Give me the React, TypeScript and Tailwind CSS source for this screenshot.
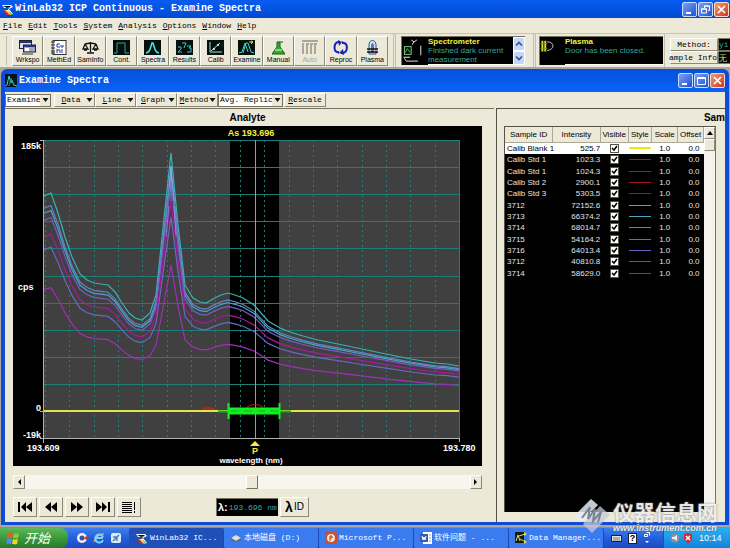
import { useState } from 'react';
import type { ReactNode } from 'react';

interface Sample {
  id: string;
  intensity: number;
  color: string;
  visible: boolean;
}

const initialSamples: Sample[] = [
  { id: 'Calib Blank 1', intensity: 525.7, color: '#f0e800', visible: true },
  { id: 'Calib Std 1', intensity: 1023.3, color: '#a01818', visible: true },
  { id: 'Calib Std 1', intensity: 1024.3, color: '#a01818', visible: true },
  { id: 'Calib Std 2', intensity: 2900.1, color: '#a01818', visible: true },
  { id: 'Calib Std 3', intensity: 5303.5, color: '#a01818', visible: true },
  { id: '3712', intensity: 72152.6, color: '#35b5b0', visible: true },
  { id: '3713', intensity: 66374.2, color: '#48a8c4', visible: true },
  { id: '3714', intensity: 68014.7, color: '#6484c4', visible: true },
  { id: '3715', intensity: 54164.2, color: '#6a68c0', visible: true },
  { id: '3716', intensity: 64013.4, color: '#7b58c8', visible: true },
  { id: '3712', intensity: 40810.8, color: '#a02fb8', visible: true },
  { id: '3714', intensity: 58629.0, color: '#a81a9c', visible: true },
];

// Strongest spectrum, in chart units; the others are scaled from it
const BASELINE = 285;
const MAX_INTENSITY = 72152.6;
const spectrum = [
  [31, 70], [38, 67], [45, 87], [52, 111], [59, 131], [67, 148], [74, 154], [81, 157], [88, 158],
  [95, 159], [102, 166], [109, 177], [116, 187], [122, 192], [129, 194], [137, 187], [143, 169],
  [150, 102], [158, 27], [165, 99], [172, 159], [180, 172], [187, 176], [193, 177], [200, 173],
  [208, 169], [215, 167], [222, 169], [230, 172], [241, 179], [248, 187], [255, 195], [267, 202],
  [277, 206], [290, 210], [305, 214], [325, 218], [349, 223], [373, 228], [398, 233], [422, 237],
  [434, 238], [446, 240],
];

const menuItems = ['File', 'Edit', 'Tools', 'System', 'Analysis', 'Options', 'Window', 'Help'];

const raised = 'border border-t-white border-l-white border-b-[#8d897a] border-r-[#8d897a] bg-[#ece9d8]';

function linePoints(intensity: number) {
  const k = intensity / MAX_INTENSITY;
  return spectrum.map(([x, y]) => `${x},${(BASELINE - k * (BASELINE - y)).toFixed(1)}`).join(' ');
}

function WinLabLogo({ className }: { className: string }) {
  return (
    <svg viewBox="0 0 13 13" className={className} aria-hidden="true">
      <path d="M1 2h9l2 2-4 2 4 5H8L4 7h3l1-2H3z" fill="#fff" />
      <path d="M2 3h7l1 1-4 1z" fill="#111" />
      <path d="M4 7l5 5H6L2 8z" fill="#d22" />
      <path d="M6 7l5 5H9L4 7z" fill="#fd3" />
      <path d="M7 7l5 5h-2z" fill="#3b3" />
    </svg>
  );
}

function SpectraLogo() {
  return (
    <svg viewBox="0 0 12 13" className="h-[13px] w-3" aria-hidden="true">
      <rect width="12" height="13" fill="#06131c" />
      <path d="M0 12l2-1 2-9 2 7 1-3 2 5 3 1" fill="none" stroke="#3fd6d0" />
      <path d="M4 12l2-8 3 8" fill="none" stroke="#1f8e6a" />
    </svg>
  );
}

function WindowButtons({ restore = false }: { restore?: boolean }) {
  const blue = 'grid h-[15px] w-[15px] place-items-center rounded-xs border border-[#c8dcff] bg-linear-to-br from-[#7aa2f4] to-[#1c4fd0]';
  return (
    <div className="flex gap-px">
      <button aria-label="Minimize" className={blue}>
        <svg viewBox="0 0 11 11" className="h-[11px] w-[11px]"><path d="M2 8h5v2H2z" fill="#fff" /></svg>
      </button>
      <button aria-label={restore ? 'Restore' : 'Maximize'} className={blue}>
        <svg viewBox="0 0 11 11" className="h-[11px] w-[11px]" fill="none" stroke="#fff">
          {restore ? (
            <>
              <path d="M4.500 4V2h5v4.500H8M4 2h6" />
              <path d="M1.500 5h5v4h-5zM1 5h6" />
            </>
          ) : (
            <path d="M1.500 2.500h8v7h-8zM1 3.500h9" />
          )}
        </svg>
      </button>
      <button
        aria-label="Close"
        className="grid h-[15px] w-[15px] place-items-center rounded-xs border border-[#ffd8cc] bg-linear-to-br from-[#ec9878] to-[#c8391a]"
      >
        <svg viewBox="0 0 11 11" className="h-[11px] w-[11px]">
          <path d="M2 2l7 7M9 2L2 9" stroke="#fff" strokeWidth="1.700" />
        </svg>
      </button>
    </div>
  );
}

const toolButtons: { label: string; disabled?: boolean; icon: ReactNode }[] = [
  {
    label: 'Wrkspo',
    icon: (
      <>
        <rect x="0.500" y="0.500" width="12" height="8" fill="#dde" stroke="#223" />
        <rect x="1" y="1" width="11" height="2" fill="#23337c" />
        <rect x="4.500" y="5" width="12" height="7" fill="#9fa8c4" stroke="#223" />
        <rect x="5" y="5" width="11" height="2" fill="#23337c" />
        <path d="M3 14h11" stroke="#333" />
        <rect x="6" y="8" width="4" height="3" fill="#fff" />
      </>
    ),
  },
  {
    label: 'MethEd',
    icon: (
      <>
        <rect x="3" y="0.500" width="13" height="14" fill="#fff" stroke="#333" />
        <path d="M1 2h4M1 5h4M1 8h4M1 11h4M1 13h4" stroke="#222" />
        <path d="M10 4H7v3h3M11 5v2h2V5M7 9v4M7 10h3v3M12 9v4" stroke="#2a3d9c" fill="none" />
      </>
    ),
  },
  {
    label: 'SamInfo',
    icon: (
      <path
        d="M8.500 2v10M5 13h7M3 4l5.500-1L14 4M3 4L1 9h5L3 4M14 4l-3 5h5l-2-5M2 10h3M12 10h3"
        stroke="#111"
        strokeWidth="1.300"
        fill="none"
      />
    ),
  },
  {
    label: 'Cont.',
    icon: (
      <>
        <rect width="17" height="15" fill="#04100c" />
        <path d="M1 13h3V3h8v10h4" stroke="#37a08c" fill="none" />
      </>
    ),
  },
  {
    label: 'Spectra',
    icon: (
      <>
        <rect width="17" height="15" fill="#04100c" />
        <path d="M2 13c4-1 4-4 6-10h1c2 6 2 9 6 10" stroke="#4fe0e0" strokeWidth="1.600" fill="none" />
      </>
    ),
  },
  {
    label: 'Results',
    icon: (
      <>
        <rect width="17" height="15" fill="#04100c" />
        <path d="M2 7h3v2L2 12h4M6 3h4L8 8M11 6h4l-2 2h2v4h-4" stroke="#3fc8c8" fill="none" />
      </>
    ),
  },
  {
    label: 'Calib',
    icon: (
      <>
        <rect width="17" height="15" fill="#04100c" />
        <path d="M3 2v10h12M4 11l9-8" stroke="#9fe0d8" fill="none" />
        <circle cx="7" cy="9" r="1" fill="#fff" />
        <circle cx="11" cy="5" r="1" fill="#fff" />
      </>
    ),
  },
  {
    label: 'Examine',
    icon: (
      <>
        <rect width="17" height="15" fill="#04100c" />
        <path d="M1 13l3-1 3-9 3 9M5 13l3-10h2l3 9 3 1" stroke="#46cfc4" fill="none" />
        <path d="M11 2h4M13 1l2 1-2 2" stroke="#e6e23c" fill="none" />
      </>
    ),
  },
  {
    label: 'Manual',
    icon: (
      <>
        <path d="M7 2h3v5l5 7H2l5-7z" fill="#30b030" stroke="#125c12" />
        <path d="M7 2l5-1M5 10h7" stroke="#e7f9e0" />
        <path d="M7 2h6" stroke="#125c12" />
      </>
    ),
  },
  {
    label: 'Auto',
    disabled: true,
    icon: <path d="M1 1h16M2 3v11M6 5v9M10 5v9M14 5v9M5 4h3M9 4h3M13 4h3" stroke="#aaa798" strokeWidth="2" />,
  },
  {
    label: 'Reproc',
    icon: (
      <>
        <path d="M7 2C2 2 1 10 5 12M11 13c5-1 5-9 1-10" stroke="#1722b8" strokeWidth="2" fill="none" />
        <path d="M6 0l4 2-3 4zM12 15l-5-2 4-4zM2 11h5v3zM15 4h-5V1z" fill="#1722b8" />
      </>
    ),
  },
  {
    label: 'Plasma',
    icon: (
      <>
        <path d="M5 14V5c0-6 7-6 7 0v9z" fill="#c8f2fa" stroke="#1a5a8c" />
        <path d="M7 13V6c0-4 3-4 3 0v7z" fill="#4d6ce0" />
        <path d="M8.500 12V5" stroke="#e23c8c" />
        <path d="M3 9h11M3 12h11" stroke="#111" strokeWidth="1.500" />
      </>
    ),
  },
];

function Chevron({ up = false }: { up?: boolean }) {
  return (
    <svg viewBox="0 0 8 8" className="h-2 w-2" aria-hidden="true">
      <path d={up ? 'M1 5.500l3-3 3 3' : 'M1 2.500l3 3 3-3'} fill="none" stroke="#3a5382" strokeWidth="1.700" />
    </svg>
  );
}

function MainToolbar() {
  return (
    <div className="flex h-[34px] items-center overflow-hidden border-t border-[#c9c5b4] bg-[#ece9d8]">
      <div className="ml-1 h-[29px] w-[3px] shrink-0 border-r border-[#c2beae]" />
      <div className="ml-[5px] grid h-[30px] w-[376px] shrink-0 grid-cols-12">
        {toolButtons.map((tool) => (
          <button
            key={tool.label}
            disabled={tool.disabled}
            className={`flex flex-col items-center gap-px pt-[3px] ${raised} text-black disabled:text-[#aaa798]`}
          >
            <svg viewBox="0 0 17 15" className="h-[15px] w-[17px]" aria-hidden="true">{tool.icon}</svg>
            <span className="text-[7px] leading-[8px]">{tool.label}</span>
          </button>
        ))}
      </div>
      <div className="ml-[5px] h-full w-[3px] shrink-0 border-x border-[#c2beae]" />
      <div className="ml-[5px] flex h-[29px] w-[124px] shrink-0 border-t border-l border-[#77735f] bg-black">
        <svg viewBox="0 0 26 28" className="h-[27px] w-[26px] shrink-0" fill="none" aria-hidden="true">
          <path d="M9 3l3 2 3-2M12 5l-2 3M2 22l2 3h12M19 9v10" stroke="#e8e8e8" />
          <rect x="2" y="10" width="7" height="8" stroke="#8ad08a" />
          <path d="M3 16l2-4 3 4" stroke="#3fd03f" />
          <path d="M1 21h7" stroke="#eee" />
        </svg>
        <div className="min-w-0 flex-1 overflow-hidden border-b border-white text-[8px] leading-[9px] whitespace-nowrap text-[#35a79c]">
          <div className="font-bold text-[#f2ef3a]">Spectrometer</div>
          <div>Finished dark current</div>
          <div>measurement</div>
        </div>
        <div className="flex w-[12px] flex-col bg-white">
          <button aria-label="Scroll up" className="grid flex-1 place-items-center rounded-xs border border-white bg-[#c6d6fb]">
            <Chevron up />
          </button>
          <button aria-label="Scroll down" className="grid flex-1 place-items-center rounded-xs border border-white bg-[#c6d6fb]">
            <Chevron />
          </button>
        </div>
      </div>
      <div className="ml-2 h-full w-[3px] shrink-0 border-x border-[#c2beae]" />
      <div className="ml-[3px] flex h-[29px] w-[124px] shrink-0 border-t border-l border-[#77735f] bg-black">
        <svg viewBox="0 0 25 28" className="h-[27px] w-[25px] shrink-0" fill="none" aria-hidden="true">
          <path d="M2 4v11M5 4v11" stroke="#dfdc2e" strokeWidth="2" />
          <path d="M0 7h7M0 12h7" stroke="#8c8a12" />
          <path d="M7 5c8 0 8 8 0 9" stroke="#c8c8c8" />
        </svg>
        <div className="min-w-0 flex-1 overflow-hidden border-b border-white text-[8px] leading-[9px] whitespace-nowrap text-[#35a79c]">
          <div className="font-bold text-[#f2ef3a]">Plasma</div>
          <div>Door has been closed.</div>
        </div>
      </div>
      <div className="ml-px h-full w-[1px] shrink-0 bg-[#c2beae]" />
      <div className="ml-[5px] grid h-[26px] min-w-0 flex-1 grid-cols-[48px_1fr] grid-rows-2 font-['Liberation_Mono',monospace] text-[8px] leading-[11px] whitespace-nowrap">
        <button className={raised}>Method:</button>
        <div className="border-y border-l border-[#77735f] bg-black text-[#35a79c]">yi</div>
        <button className={`flex justify-end ${raised}`}>ample Info</button>
        <div className="border-y border-l border-[#77735f] bg-black font-['Noto_Sans_CJK_SC',sans-serif] text-[#d6cf6a]">无</div>
      </div>
    </div>
  );
}

function DropArrow() {
  return (
    <svg viewBox="0 0 7 4" className="pointer-events-none h-1 w-[7px] shrink-0" aria-hidden="true">
      <path d="M0.500 0h6l-3 4z" fill="#111" />
    </svg>
  );
}

function ToolSelect({ label, width, options }: { label: string; width: string; options: string[] }) {
  return (
    <label className={`flex h-[13px] shrink-0 items-center border border-[#77735f] bg-white ${width}`}>
      <select aria-label={label} className="h-full min-w-0 flex-1 appearance-none overflow-hidden bg-white pl-px">
        {options.map((option) => (
          <option key={option}>{option}</option>
        ))}
      </select>
      <span className="grid h-full w-[10px] place-items-center bg-[#ece9d8]">
        <DropArrow />
      </span>
    </label>
  );
}

function SpectraToolbar() {
  return (
    <div className="flex h-4 items-center bg-[#ece9d8] font-['Liberation_Mono',monospace] text-[8px] leading-[10px]">
      <ToolSelect label="Mode" width="w-[46px]" options={['Examine']} />
      <div className="ml-[3px] flex">
        {['Data', 'Line', 'Graph', 'Method'].map((name) => (
          <button key={name} className={`flex h-[14px] w-[41px] items-center justify-between px-px ${raised}`}>
            <span className="flex-1 text-center">
              <span className="underline">{name[0]}</span>
              {name.slice(1)}
            </span>
            <DropArrow />
          </button>
        ))}
      </div>
      <ToolSelect label="Replicates" width="w-[65px]" options={['Avg. Replicates']} />
      <button className={`ml-px h-[14px] w-[42px] ${raised}`}>
        <span className="underline">R</span>escale
      </button>
    </div>
  );
}

function SpectraChart({ samples }: { samples: Sample[] }) {
  const rows = Array.from({ length: 10 }, (_, i) => 14.5 + Math.round(i * 27.1));
  const cols = Array.from({ length: 17 }, (_, i) => 32.5 + Math.round(i * 24.35));

  return (
    <svg
      viewBox="0 0 469 340"
      className="block w-full bg-black font-['Liberation_Sans',sans-serif] text-[9px] font-bold"
      role="img"
      aria-label="Spectra"
    >
      <rect x="31" y="14" width="415" height="298" fill="#404040" />
      <rect x="217" y="14" width="49" height="298" fill="#000" />
      <g stroke="#1f7f78">
        {rows.map((y) => (
          <path key={y} d={`M31 ${y}H446`} />
        ))}
        {cols.map((x) => (
          <path key={x} d={`M${x} 14V312`} strokeDasharray="2 3" />
        ))}
        <path d="M446.500 14V312" />
      </g>
      <g fill="none" strokeWidth="1.200">
        {samples
          .filter((sample) => sample.visible && sample.intensity > 10000)
          .map((sample) => (
            <polyline key={sample.intensity} points={linePoints(sample.intensity)} stroke={sample.color} />
          ))}
      </g>
      <path d="M158 40v35M156 60l2-20 3 35M153 110l3-30M163 110l-2-30" stroke="#9fb4ff" fill="none" opacity="0.6" />
      <path d="M242.500 14V312" stroke="#a8a440" />
      <path d="M27 14.500h4M30.500 14V317M27 312.500H446M446.500 312v4M27 285.500h4" stroke="#b0b0b0" fill="none" />
      <path d="M187 284c4-4 13-4 17 0z" fill="#b02814" />
      <path d="M31 285H446" stroke="#e2e24a" strokeWidth="2" />
      <path d="M234 281q8-5 16 0" stroke="#b02814" fill="none" />
      <path d="M205 285.500h73" stroke="#10b010" strokeWidth="2" />
      <path d="M216 285h51" stroke="#10f020" strokeWidth="7" />
      <path d="M215.500 277v16M266.500 277v16" stroke="#10f020" strokeWidth="2" />
      <path d="M218 285h47" stroke="#08b818" strokeDasharray="8 5" />
      <path d="M242 315l5 5h-10z" fill="#f2ef3a" />
      <g fill="#fff">
        <text x="28" y="23" textAnchor="end">185k</text>
        <text x="5" y="164">cps</text>
        <text x="28" y="285" textAnchor="end">0</text>
        <text x="28" y="312" textAnchor="end">-19k</text>
        <text x="14" y="325">193.609</text>
        <text x="430" y="325">193.780</text>
        <text x="238" y="337" textAnchor="middle" fontSize="8">wavelength (nm)</text>
      </g>
      <g fill="#f2ef3a">
        <text x="238" y="10" textAnchor="middle">As 193.696</text>
        <text x="242" y="328" textAnchor="middle">P</text>
      </g>
    </svg>
  );
}

const navButtons = [
  { label: 'First', path: 'M2 1h2v10H2zM10 1v10L5 6zM16 1v10l-6-5z' },
  { label: 'Previous', path: 'M9 1v10L3 6zM15 1v10L9 6z' },
  { label: 'Next', path: 'M3 1v10l6-5zM9 1v10l6-5z' },
  { label: 'Last', path: 'M2 1v10l6-5zM8 1v10l5-5zM14 1h2v10h-2z' },
  { label: 'List', path: 'M2 1h10v1H2zM2 3h10v1H2zM2 5h10v1H2zM2 7h10v1H2zM2 9h10v1H2zM2 11h10v1H2zM14 1h1v8h-1zM14 10h1v2h-1z' },
];

function AnalytePanel({ samples }: { samples: Sample[] }) {
  const [position, setPosition] = useState(51);

  return (
    <section className="min-w-0 border-t border-[#77735f] pr-[12px] pl-2">
      <h2 className="h-[17px] text-center text-[10px] leading-[17px] font-bold">Analyte</h2>
      <SpectraChart samples={samples} />
      <div className="mt-[9px] flex h-[14px] bg-[#f6f5ee]">
        <button aria-label="Scroll left" className={`grid w-3 place-items-center ${raised}`}>
          <svg viewBox="0 0 4 6" className="h-[6px] w-1"><path d="M4 0v6L1 3z" /></svg>
        </button>
        <input
          type="range"
          aria-label="Wavelength position"
          value={position}
          onChange={(e) => setPosition(Number(e.target.value))}
          className="h-full min-w-0 flex-1 appearance-none bg-transparent [&::-webkit-slider-thumb]:h-[14px] [&::-webkit-slider-thumb]:w-3 [&::-webkit-slider-thumb]:appearance-none [&::-webkit-slider-thumb]:border [&::-webkit-slider-thumb]:border-t-white [&::-webkit-slider-thumb]:border-r-[#77735f] [&::-webkit-slider-thumb]:border-b-[#77735f] [&::-webkit-slider-thumb]:border-l-white [&::-webkit-slider-thumb]:bg-[#ece9d8]"
        />
        <button aria-label="Scroll right" className={`grid w-3 place-items-center ${raised}`}>
          <svg viewBox="0 0 4 6" className="h-[6px] w-1"><path d="M0 0v6l3-3z" /></svg>
        </button>
      </div>
      <div className="mt-2 flex h-5 items-center gap-[2px]">
        {navButtons.map((nav) => (
          <button key={nav.label} aria-label={nav.label} className={`grid h-5 w-6 place-items-center ${raised}`}>
            <svg viewBox="0 0 18 12" className="h-3 w-[18px]"><path d={nav.path} /></svg>
          </button>
        ))}
        <div className="ml-[73px] flex h-[18px] w-[62px] items-center border-t border-l border-[#77735f] bg-black pl-px whitespace-nowrap">
          <span className="text-[11px] font-bold text-white">λ:</span>
          <span className="ml-px font-['Liberation_Mono',monospace] text-[8px] text-[#35a7b0]">193.696 nm</span>
        </div>
        <button className={`flex h-5 w-[29px] items-center justify-center gap-px ${raised}`}>
          <span className="text-[14px] leading-[16px] font-bold">λ</span>
          <span className="text-[10px] leading-[16px]">ID</span>
        </button>
      </div>
    </section>
  );
}

function SamplesPanel({ samples, onToggle }: { samples: Sample[]; onToggle: (index: number) => void }) {
  const head = 'border-r border-b border-[#aca899] bg-[#ece9d8] p-0 text-center font-normal text-black';

  return (
    <section className="flex min-w-0 flex-col border-t border-l border-[#55524a] pr-[9px] pb-[10px] pl-[7px]">
      <h2 className="-mr-[9px] h-[17px] text-right text-[10px] leading-[17px] font-bold">Sam</h2>
      <div className="flex flex-1 border-t border-l border-[#55524a] bg-black">
        <div className="min-w-0 flex-1">
          <table className="h-[152px] w-full table-fixed border-collapse text-[8px] leading-[9px] whitespace-nowrap text-[#e4e4e4]">
            <thead>
              <tr className="h-[15px]">
                <th className={`w-[24%] ${head}`}>Sample ID</th>
                <th className={`w-[24%] ${head}`}>Intensity</th>
                <th className={`w-[14%] ${head}`}>Visible</th>
                <th className={`w-[12%] ${head}`}>Style</th>
                <th className={`w-[13%] ${head}`}>Scale</th>
                <th className={`w-[13%] ${head}`}>Offset</th>
              </tr>
            </thead>
            <tbody>
              {samples.map((sample, index) => (
                <tr key={index} className={index === 0 ? 'bg-white text-black' : ''}>
                  <td className="p-0 pl-[2px]">{sample.id}</td>
                  <td className="p-0 text-right">{sample.intensity.toFixed(1)}</td>
                  <td className="p-0">
                    <label className="relative mx-auto block h-[9px] w-[9px]">
                      <input
                        type="checkbox"
                        aria-label={`Show ${sample.id}`}
                        checked={sample.visible}
                        onChange={() => onToggle(index)}
                        className="peer block h-[9px] w-[9px] appearance-none border border-[#55524a] bg-white"
                      />
                      <svg viewBox="0 0 9 9" className="pointer-events-none absolute inset-0 hidden peer-checked:block">
                        <path d="M2 4l2 2 3-4" fill="none" stroke="#000" strokeWidth="1.500" />
                      </svg>
                    </label>
                  </td>
                  <td className="p-0">
                    <div
                      className={`mx-auto w-[22px] ${index === 0 ? 'h-[2px]' : 'h-px'}`}
                      style={{ backgroundColor: sample.color }}
                    />
                  </td>
                  <td className="p-0 text-center">1.0</td>
                  <td className="p-0 pr-1 text-right">0.0</td>
                </tr>
              ))}
            </tbody>
          </table>
        </div>
        <div className="w-3 border-r border-[#77735f] bg-[#f4f3ec]">
          <button aria-label="Scroll up" className={`grid h-3 w-full place-items-center ${raised}`}>
            <svg viewBox="0 0 6 4" className="h-1 w-[6px]"><path d="M0 4h6L3 0z" /></svg>
          </button>
          <div className={`h-3 w-full ${raised}`} />
        </div>
      </div>
    </section>
  );
}

const tasks = [
  { title: 'WinLab32 IC...', icon: <WinLabLogo className="h-[13px] w-[13px] shrink-0" /> },
  {
    title: '本地磁盘 (D:)',
    icon: (
      <svg viewBox="0 0 12 12" className="h-3 w-3 shrink-0">
        <path d="M1 6l5-3 5 3-5 3z" fill="#ddd" />
        <path d="M1 6v2l5 2 5-2V6L6 9z" fill="#666" />
      </svg>
    ),
  },
  {
    title: 'Microsoft P...',
    icon: (
      <svg viewBox="0 0 12 12" className="h-3 w-3 shrink-0">
        <rect width="12" height="12" rx="1" fill="#c8502a" />
        <circle cx="6" cy="6" r="4" fill="#fbe3d6" />
        <path d="M5 9V4h2v2H5" stroke="#b53c1a" fill="none" />
      </svg>
    ),
  },
  {
    title: '软件问题 - ...',
    icon: (
      <svg viewBox="0 0 12 12" className="h-3 w-3 shrink-0">
        <path d="M3 0h9v12H3z" fill="#fff" />
        <path d="M0 2h8v8H0z" fill="#3a5cae" />
        <path d="M2 4l1 4 1-3 1 3 1-4" stroke="#fff" fill="none" />
        <path d="M9 3h2M9 6h2M9 9h2" stroke="#8aa" />
      </svg>
    ),
  },
  {
    title: 'Data Manager...',
    icon: (
      <svg viewBox="0 0 12 12" className="h-3 w-3 shrink-0">
        <rect width="9" height="11" fill="#101c14" />
        <path d="M1 9l2-6 2 6M4 4l6-2M5 7l6 3" stroke="#e4dc4c" fill="none" />
        <path d="M9 0l3 2-3 2zM9 8l3 2-3 2z" fill="#e4dc4c" />
      </svg>
    ),
  },
];

function Taskbar() {
  return (
    <footer className="flex h-[21px] overflow-hidden border-t border-[#5a94f2] bg-linear-to-b from-[#3c80ee] via-[#245edc] to-[#1c4cc0] text-white">
      <button className="flex w-[68px] shrink-0 items-center gap-1 rounded-r-lg bg-linear-to-b from-[#5cb85a] via-[#3a9a3a] to-[#2a7a2c] pl-[6px] font-['Noto_Sans_CJK_SC',sans-serif] text-[13px] leading-[18px] italic">
        <svg viewBox="0 0 14 13" className="h-[13px] w-[14px]" aria-hidden="true">
          <path d="M2 1c2-1 3 0 5 0L6 6C4 6 3 5 1 6z" fill="#f0562a" />
          <path d="M8 1c2 1 3 1 5 0l-1 5c-2 1-3 0-5 0z" fill="#86cf3c" />
          <path d="M1 7c2-1 3 0 5 0l-1 5c-2 0-3-1-5 0z" fill="#4a90f0" />
          <path d="M7 7c2 1 3 1 5 0l-1 5c-2 1-3 0-5 0z" fill="#fad02c" />
        </svg>
        开始
      </button>
      <div className="flex w-[61px] shrink-0 items-center gap-[5px] pl-2">
        <svg viewBox="0 0 12 12" className="h-3 w-3">
          <circle cx="6" cy="6" r="5" fill="#f2f2f2" />
          <circle cx="6" cy="6" r="2.500" fill="#444aa8" />
          <path d="M7 6l4-2v4z" fill="#d8382c" />
        </svg>
        <svg viewBox="0 0 12 12" className="h-3 w-3" fill="none">
          <path d="M10 8a4 4 0 1 1 0-3M3 6h7" stroke="#7fd2ff" strokeWidth="2" />
          <path d="M1 10C2 5 8 1 11 2" stroke="#e8d25a" />
        </svg>
        <svg viewBox="0 0 12 12" className="h-3 w-3">
          <rect x="1" y="1" width="10" height="10" rx="2" fill="#dcecf6" />
          <path d="M3 9l6-6M3 5h4v4" stroke="#4282b4" strokeWidth="1.500" fill="none" />
        </svg>
      </div>
      <div className="flex min-w-0 flex-1 font-['Liberation_Mono','Noto_Sans_CJK_SC',monospace] text-[8px] leading-[12px]">
        {tasks.map((task, index) => (
          <button
            key={task.title}
            className={`flex min-w-0 flex-1 items-center gap-[2px] overflow-hidden rounded-xs border-r border-[#1a48b4] pl-[6px] whitespace-nowrap ${
              index === 0 ? 'bg-[#1e50b8]' : 'bg-[#3a7cf0]'
            }`}
          >
            {task.icon}
            {task.title}
          </button>
        ))}
      </div>
      <div className="flex w-[59px] shrink-0 items-center gap-[6px] pl-[7px]">
        <svg viewBox="0 0 11 8" className="h-2 w-[11px]">
          <rect x="0.500" y="1.500" width="10" height="6" fill="#e8e4d4" stroke="#222" />
          <path d="M2 4h7M2 6h7" stroke="#777" />
        </svg>
        <span className="grid h-[11px] w-[9px] place-items-center border border-[#222] bg-white text-[9px] leading-[9px] font-bold text-black">?</span>
        <svg viewBox="0 0 8 14" className="h-[14px] w-2" fill="none" stroke="#fff">
          <path d="M3.500 1.500h3v3M1.500 3.500h3v2h-3z" />
          <path d="M2 10h4l-2 2z" fill="#fff" stroke="none" />
        </svg>
      </div>
      <div className="flex w-[67px] shrink-0 items-center gap-[3px] border-l border-[#1058c0] bg-linear-to-b from-[#2ab0f2] to-[#1284dc] pl-[6px]">
        <svg viewBox="0 0 10 10" className="h-[10px] w-[10px]">
          <circle cx="5" cy="5" r="4.500" fill="#8a9098" />
          <path d="M2 4h2l3-2v6L4 6H2z" fill="#eee" />
        </svg>
        <svg viewBox="0 0 10 11" className="h-[11px] w-[10px]">
          <path d="M1 1l4-1 4 1v5L5 11 1 6z" fill="#d4283a" />
          <path d="M3 3l4 4M7 3L3 7" stroke="#fff" strokeWidth="1.500" />
        </svg>
        <time className="ml-[3px] text-[9px] leading-[12px]">10:14</time>
      </div>
    </footer>
  );
}

function Watermark() {
  return (
    <div className="pointer-events-none absolute right-3 bottom-[14px] flex items-center gap-[2px] text-white/85">
      <svg viewBox="0 0 38 36" className="h-9 w-[38px]" aria-hidden="true">
        <path d="M18 1l7 6-17 17-7-6z" fill="#e8ecf2" opacity="0.85" />
        <path d="M27 8l10 9-18 18-9-9z" fill="#c4cad6" opacity="0.75" />
        <path d="M9 20l8-11-2 12 7-10-2 12 8-9-3 10" fill="none" stroke="#7a8496" strokeWidth="2" />
      </svg>
      <div>
        <div className="font-['Noto_Sans_CJK_SC',sans-serif] text-[21px] leading-[24px] font-bold [text-shadow:0_0_2px_#777]">仪器信息网</div>
        <div className="text-[9px] leading-[10px] font-bold italic [text-shadow:0_0_2px_#555]">www.instrument.com.cn</div>
      </div>
    </div>
  );
}

export default function App() {
  const [samples, setSamples] = useState<Sample[]>(initialSamples);

  const handleToggle = (index: number) => {
    setSamples(samples.map((sample, i) => (i === index ? { ...sample, visible: !sample.visible } : sample)));
  };

  return (
    <div className="relative flex min-h-screen flex-col overflow-hidden bg-[#aca899] font-['Liberation_Sans',sans-serif] text-black">
      <header className="flex h-[18px] items-center gap-px bg-linear-to-b from-[#0a5cf0] via-[#0454e4] to-[#0348d0] pr-px pl-px text-white">
        <WinLabLogo className="h-[13px] w-[13px]" />
        <h1 className="flex-1 font-['Liberation_Mono',monospace] text-[10px] leading-[14px] font-bold whitespace-nowrap">
          WinLab32 ICP Continuous - Examine Spectra
        </h1>
        <WindowButtons restore />
      </header>
      <nav className="flex h-[15px] items-center gap-[6px] bg-[#ece9d8] pl-[3px] font-['Liberation_Mono',monospace] text-[8px] leading-[12px]">
        {menuItems.map((item) => (
          <button key={item}>
            <span className="underline">{item[0]}</span>
            {item.slice(1)}
          </button>
        ))}
      </nav>
      <MainToolbar />

      <main className="mx-[1px] mt-[2px] mb-[2px] flex flex-1 flex-col rounded-t-md bg-[#0c4cd8] px-1 pb-[3px]">
        <div className="flex h-[23px] items-center gap-[2px] rounded-t-md bg-linear-to-b from-[#0450dc] to-[#0a64f6] text-white">
          <SpectraLogo />
          <h2 className="flex-1 font-['Liberation_Mono',monospace] text-[10px] leading-[14px] font-bold">Examine Spectra</h2>
          <WindowButtons />
        </div>
        <SpectraToolbar />
        <div className="grid flex-1 grid-cols-[489fr_229fr] gap-[2px] bg-[#ece9d8]">
          <AnalytePanel samples={samples} />
          <SamplesPanel samples={samples} onToggle={handleToggle} />
        </div>
      </main>

      <Taskbar />
      <Watermark />
    </div>
  );
}
